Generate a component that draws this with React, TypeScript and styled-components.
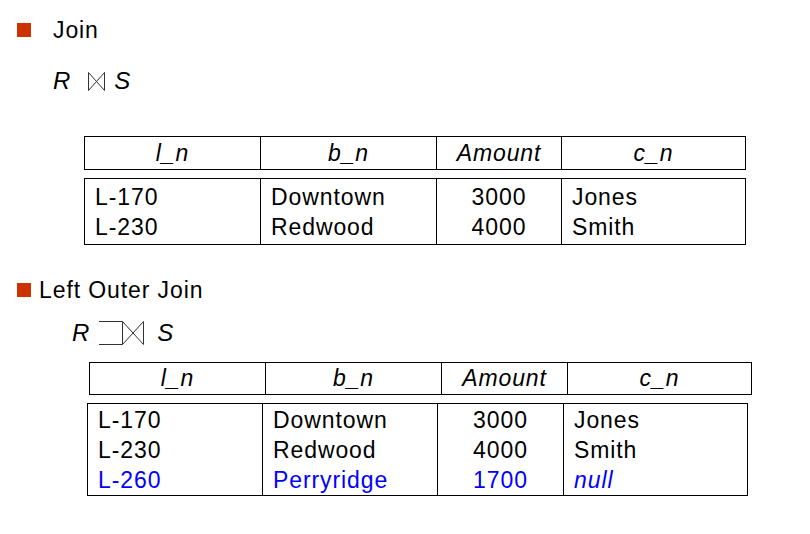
import styled, { createGlobalStyle } from "styled-components";

const GlobalStyle = createGlobalStyle`
    html, body {
        margin: 0;
        padding: 0;
        background: #ffffff;
    }
    body {
        font-family: "Liberation Sans", Arial, sans-serif;
        color: #000000;
    }
`;

const Page = styled.div`
    width: 810px;
    height: 534px;
    padding-top: 15px;
    box-sizing: border-box;
    display: flex;
    flex-direction: column;
    font-size: 23px;
    letter-spacing: 0.9px;
`;

const Heading = styled.div<{ $gap: number; $mt?: number }>`
    display: flex;
    align-items: center;
    height: 30px;
    margin-left: 17px;
    margin-top: ${(p) => p.$mt ?? 0}px;
    gap: ${(p) => p.$gap}px;
    font-size: 23px;
`;

const Bullet = styled.span`
    width: 14px;
    height: 14px;
    background: #cc3300;
    flex: none;
`;

const Expr = styled.div<{ $indent: number; $mt: number }>`
    display: flex;
    align-items: center;
    height: 30px;
    margin-left: ${(p) => p.$indent}px;
    margin-top: ${(p) => p.$mt}px;
    font-size: 24px;
    letter-spacing: 0;
`;

const Var = styled.i`
    font-style: italic;
`;

const Space = styled.span<{ $w: number }>`
    width: ${(p) => p.$w}px;
    flex: none;
`;

const Grid = styled.div<{ $indent: number; $width: number; $cols: string; $mt?: number }>`
    display: grid;
    grid-template-columns: ${(p) => p.$cols};
    width: ${(p) => p.$width}px;
    margin-left: ${(p) => p.$indent}px;
    margin-top: ${(p) => p.$mt ?? 0}px;
    border: 1px solid #000;
    box-sizing: border-box;
`;

const HeadCell = styled.div<{ $h: number }>`
    height: ${(p) => p.$h}px;
    line-height: ${(p) => p.$h}px;
    text-align: center;
    font-style: italic;
    font-size: 23px;
    &:not(:first-child) {
        border-left: 1px solid #000;
    }
`;

const BodyCol = styled.div<{ $center?: boolean; $pt: number; $pb: number }>`
    display: flex;
    flex-direction: column;
    padding: ${(p) => p.$pt}px 0 ${(p) => p.$pb}px ${(p) => (p.$center ? 0 : 10)}px;
    text-align: ${(p) => (p.$center ? "center" : "left")};
    &:not(:first-child) {
        border-left: 1px solid #000;
    }
`;

const Cell = styled.span<{ $blue?: boolean; $italic?: boolean }>`
    line-height: 30px;
    font-size: 23px;
    color: ${(p) => (p.$blue ? "#0000ff" : "#000")};
    font-style: ${(p) => (p.$italic ? "italic" : "normal")};
`;

function JoinIcon() {
    return (
        <svg width="17" height="19" viewBox="0 0 17 19">
            <path d="M0.5 0.5 V18.5 L16.5 0.5 V18.5 Z" fill="none" stroke="#333" strokeWidth="1" />
        </svg>
    );
}

function LeftOuterJoinIcon() {
    return (
        <svg width="46" height="24" viewBox="0 0 46 24">
            <path d="M0 0.5 H23.5 V23.5 H0 M23.5 0.5 L44.5 23.5 V0.5 L23.5 23.5" fill="none" stroke="#333" strokeWidth="1" />
        </svg>
    );
}

type Row = { l: string; b: string; a: string; c: string; blue?: boolean };

const heads = ["l_n", "b_n", "Amount", "c_n"];

function Relation({ rows, head, body }: {
    rows: Row[];
    head: { indent: number; width: number; cols: string; mt: number; h: number };
    body: { indent: number; width: number; cols: string; gap: number; pt: number; pb: number };
}) {
    return (
        <>
            <Grid $indent={head.indent} $width={head.width} $cols={head.cols} $mt={head.mt}>
                {heads.map((h) => <HeadCell key={h} $h={head.h}>{h}</HeadCell>)}
            </Grid>
            <Grid $indent={body.indent} $width={body.width} $cols={body.cols} $mt={body.gap}>
                <BodyCol $pt={body.pt} $pb={body.pb}>
                    {rows.map((r) => <Cell key={r.l} $blue={r.blue}>{r.l}</Cell>)}
                </BodyCol>
                <BodyCol $pt={body.pt} $pb={body.pb}>
                    {rows.map((r) => <Cell key={r.l} $blue={r.blue}>{r.b}</Cell>)}
                </BodyCol>
                <BodyCol $center $pt={body.pt} $pb={body.pb}>
                    {rows.map((r) => <Cell key={r.l} $blue={r.blue}>{r.a}</Cell>)}
                </BodyCol>
                <BodyCol $pt={body.pt} $pb={body.pb}>
                    {rows.map((r) => <Cell key={r.l} $blue={r.blue} $italic={r.c === "null"}>{r.c}</Cell>)}
                </BodyCol>
            </Grid>
        </>
    );
}

const joinRows: Row[] = [
    { l: "L-170", b: "Downtown", a: "3000", c: "Jones" },
    { l: "L-230", b: "Redwood", a: "4000", c: "Smith" },
];

const outerRows: Row[] = [
    ...joinRows,
    { l: "L-260", b: "Perryridge", a: "1700", c: "null", blue: true },
];

export default function App() {
    return (
        <Page>
            <GlobalStyle />
            <Heading $gap={22}>
                <Bullet />
                <span>Join</span>
            </Heading>
            <Expr $indent={53} $mt={21}>
                <Var>R</Var>
                <Space $w={18} />
                <JoinIcon />
                <Space $w={9} />
                <Var>S</Var>
            </Expr>
            <Relation
                rows={joinRows}
                head={{ indent: 84, width: 662, cols: "175px 176px 125px 1fr", mt: 40, h: 32 }}
                body={{ indent: 84, width: 662, cols: "175px 176px 125px 1fr", gap: 8, pt: 3, pb: 2 }}
            />
            <Heading $gap={8} $mt={30}>
                <Bullet />
                <span>Left Outer Join</span>
            </Heading>
            <Expr $indent={72} $mt={13}>
                <Var>R</Var>
                <Space $w={10} />
                <LeftOuterJoinIcon />
                <Space $w={12} />
                <Var>S</Var>
            </Expr>
            <Relation
                rows={outerRows}
                head={{ indent: 89, width: 663, cols: "175px 176px 126px 1fr", mt: 14, h: 31 }}
                body={{ indent: 87, width: 661, cols: "174px 175px 126px 1fr", gap: 8, pt: 1, pb: 0 }}
            />
        </Page>
    );
}
